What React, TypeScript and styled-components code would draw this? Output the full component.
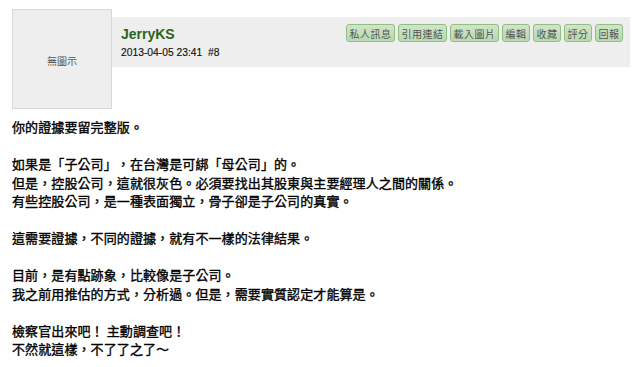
import React from "react";
import styled, { createGlobalStyle } from "styled-components";

const Global = createGlobalStyle`
  html, body { margin: 0; padding: 0; background: #fff; }
  body { font-family: "Liberation Sans", "Noto Sans CJK TC", sans-serif; }
`;

const Page = styled.div`
  padding: 9px 10px 0 12px;
`;

const PostHead = styled.div`
  display: flex;
  align-items: flex-start;
`;

const Avatar = styled.div`
  box-sizing: border-box;
  width: 100px;
  height: 100px;
  flex: none;
  background: #eeeeee;
  border: 1px solid #d8d8d8;
  display: flex;
  align-items: center;
  justify-content: center;
  font-family: "Noto Sans CJK TC", sans-serif;
  font-size: 10px;
  color: #555;
  padding-top: 2px;
`;

const HeadBar = styled.div`
  flex: 1;
  margin-top: 8px;
  height: 50px;
  background: #eeeeee;
  display: flex;
  justify-content: space-between;
  align-items: flex-start;
  padding: 0 7px 0 9px;
  box-sizing: border-box;
`;

const Meta = styled.div`
  display: flex;
  flex-direction: column;
  padding-top: 9px;
`;

const UserName = styled.span`
  font-family: "Liberation Sans", sans-serif;
  font-weight: bold;
  font-size: 14px;
  line-height: 16px;
  color: #2b6420;
`;

const DateLine = styled.span`
  font-family: "Liberation Sans", sans-serif;
  font-size: 10.3px;
  line-height: 12px;
  margin-top: 5px;
  color: #111;
  white-space: pre;
  -webkit-text-stroke: 0.15px #111;
`;

const Buttons = styled.div`
  display: flex;
  gap: 3px;
  margin-top: 7px;
`;

const Btn = styled.span<{ $w: number }>`
  box-sizing: border-box;
  width: ${(p) => p.$w}px;
  height: 18px;
  display: flex;
  align-items: center;
  justify-content: center;
  background: linear-gradient(#cfe6c8, #b8d8ae);
  border: 1px solid #93bd86;
  border-radius: 3px;
  font-family: "Noto Sans CJK TC", sans-serif;
  font-size: 10px;
  color: #555;
  letter-spacing: 0.5px;
`;

const Body = styled.div`
  margin-top: 9px;
  font-family: "Noto Sans CJK TC", sans-serif;
  font-size: 13px;
  line-height: 18.5px;
  letter-spacing: 0.1px;
  color: #000;
  text-spacing-trim: space-all;
  -webkit-text-stroke: 0.35px #000;
`;

const buttons: [string, number][] = [
  ["私人訊息", 49],
  ["引用連結", 49],
  ["載入圖片", 49],
  ["編輯", 28],
  ["收藏", 28],
  ["評分", 28],
  ["回報", 28],
];

const lines = [
  "你的證據要留完整版。",
  "",
  "如果是「子公司」，在台灣是可綁「母公司」的。",
  "但是，控股公司，這就很灰色。必須要找出其股東與主要經理人之間的關係。",
  "有些控股公司，是一種表面獨立，骨子卻是子公司的真實。",
  "",
  "這需要證據，不同的證據，就有不一樣的法律結果。",
  "",
  "目前，是有點跡象，比較像是子公司。",
  "我之前用推估的方式，分析過。但是，需要實質認定才能算是。",
  "",
  "檢察官出來吧！ 主動調查吧！",
  "不然就這樣，不了了之了～",
];

export default function App() {
  return (
    <Page lang="zh-Hant">
      <Global />
      <PostHead>
        <Avatar>無圖示</Avatar>
        <HeadBar>
          <Meta>
            <UserName>JerryKS</UserName>
            <DateLine>2013-04-05 23:41  #8</DateLine>
          </Meta>
          <Buttons>
            {buttons.map(([t, w]) => (
              <Btn key={t} $w={w}>
                {t}
              </Btn>
            ))}
          </Buttons>
        </HeadBar>
      </PostHead>
      <Body>
        {lines.map((l, i) => (
          <React.Fragment key={i}>
            {l}
            <br />
          </React.Fragment>
        ))}
      </Body>
    </Page>
  );
}
